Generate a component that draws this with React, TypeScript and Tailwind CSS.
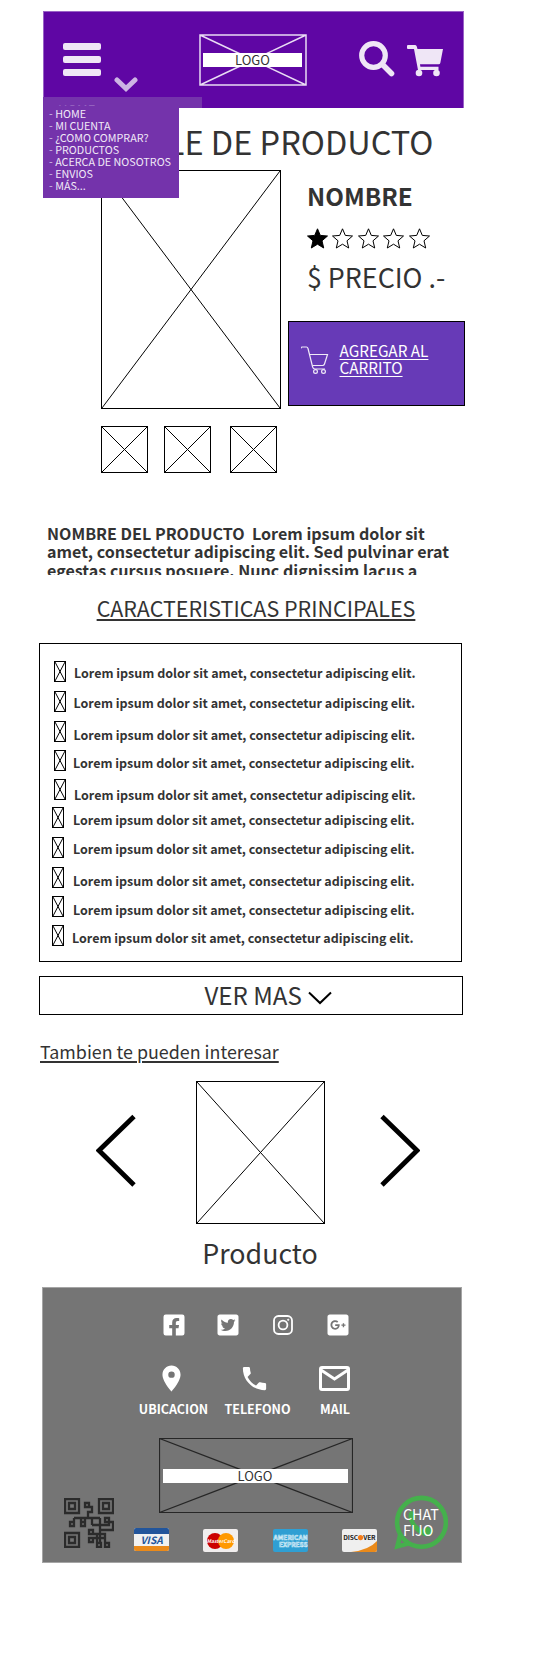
import { FaFacebookSquare, FaTwitterSquare, FaGooglePlusSquare } from "react-icons/fa";
import { MdLocationOn, MdPhone } from "react-icons/md";

const menuItems = ["HOME", "MI CUENTA", "¿COMO COMPRAR?", "PRODUCTOS", "ACERCA DE NOSOTROS", "ENVIOS", "MÁS..."];

const features = [
  { row: "mt-[17px] pl-[14px]", text: "ml-[8px] mt-[1px]" },
  { row: "mt-[9px] pl-[14px]", text: "ml-[7.5px] mt-[1px]" },
  { row: "mt-[9px] pl-[14px]", text: "ml-[7.5px] mt-[3px]" },
  { row: "mt-[8px] pl-[14px]", text: "ml-[7px] mt-[2px]" },
  { row: "mt-[8px] pl-[14px]", text: "ml-[8px] mt-[5px]" },
  { row: "mt-[7px] pl-[12px]", text: "ml-[9px] mt-[2px]" },
  { row: "mt-[9px] pl-[12px]", text: "ml-[9px] mt-[1px]" },
  { row: "mt-[9px] pl-[12px]", text: "ml-[9px] mt-[3px]" },
  { row: "mt-[8px] pl-[12px]", text: "ml-[9px] mt-[3px]" },
  { row: "mt-[8px] pl-[12px]", text: "ml-[8px] mt-[2px]" },
];

function Placeholder({ className }: { className: string }) {
  return (
    <div className={`shrink-0 border border-black ${className}`}>
      <svg className="block h-full w-full" viewBox="0 0 100 100" preserveAspectRatio="none">
        <path d="M0 0L100 100M100 0L0 100" stroke="#000" strokeWidth="1" vectorEffect="non-scaling-stroke" />
      </svg>
    </div>
  );
}

function Star({ filled }: { filled?: boolean }) {
  return (
    <svg className="h-[21px] w-[21px] overflow-visible" viewBox="0 0 21 21">
      <path
        d="M10.5 .8L13.3 7.4L20.5 8L15 12.8L16.7 20L10.5 16.2L4.3 20L6 12.8L.5 8L7.7 7.4Z"
        fill={filled ? "#000" : "none"}
        stroke="#000"
        strokeWidth="1"
      />
    </svg>
  );
}

function Header() {
  return (
    <header className="relative z-10 ml-[43px] mt-[11px] flex h-[97px] w-[421px] items-start border-x border-t border-[#9a63c6] bg-[#5f06a4]">
      <div className="ml-[19px] mt-[31px] flex w-[38px] flex-col gap-[6px]">
        <span className="h-[7px] rounded-[2px] bg-[#efe6f6]" />
        <span className="h-[7px] rounded-[2px] bg-[#efe6f6]" />
        <span className="h-[7px] rounded-[2px] bg-[#efe6f6]" />
      </div>
      <svg className="ml-[13px] mt-[65px] h-[15px] w-[24px]" viewBox="0 0 24 15">
        <path d="M3 3L12 11.5L21 3" fill="none" stroke="#cdb4e4" strokeWidth="5" strokeLinecap="round" />
      </svg>
      <div className="relative ml-[61px] mt-[22px] flex h-[52px] w-[108px] items-center">
        <svg className="absolute inset-0 h-full w-full" viewBox="0 0 108 52">
          <path d="M1 1H107V51H1ZL107 51M107 1L1 51" fill="none" stroke="#e9dcf4" strokeWidth="1.5" />
        </svg>
        <div className="relative ml-[4px] h-[14px] w-[99px] bg-white text-center text-[13px] leading-[13px] text-[#333]">LOGO</div>
      </div>
      <svg className="ml-[52px] mt-[29px] h-[37px] w-[36px]" viewBox="0 0 36 37">
        <circle cx="14.5" cy="14.5" r="11.8" fill="none" stroke="#efe6f6" strokeWidth="5.2" />
        <path d="M24 24L32.5 32.5" stroke="#efe6f6" strokeWidth="5.6" strokeLinecap="round" />
      </svg>
      <svg className="ml-[12px] mt-[33px] h-[32px] w-[36px]" viewBox="0 0 36 32">
        <path
          d="M1 0H8.3Q9.3 0 9.8 1.5L10.5 4H36L33.3 18Q33 19.3 31.6 19.3H13L13.4 21.8H31.5V25H11L7 4H1Q0 4 0 3V1Q0 0 1 0Z"
          fill="#efe6f6"
        />
        <circle cx="12" cy="28" r="3.3" fill="#efe6f6" />
        <circle cx="29.5" cy="28" r="3.3" fill="#efe6f6" />
      </svg>

      <div className="absolute -left-px top-[85px] h-[11px] w-[159px] overflow-hidden bg-[#7433ab] pl-[15px] text-[13px] leading-[25px] text-[#9361bf]">
        HOME
      </div>
      <nav className="absolute -left-px top-[94px] h-[92px] w-[136px] bg-[#7433ab] pl-[6px] pt-[2px]">
        <ul>
          {menuItems.map((item) => (
            <li key={item} className="h-[12px] whitespace-nowrap text-[10.75px] leading-[12px] text-[#f1e9f7]">
              <span className="text-[#d6c2e6]">-</span> {item}
            </li>
          ))}
        </ul>
      </nav>
    </header>
  );
}

function Product() {
  return (
    <section className="flex pl-[101px]">
      <div className="w-[180px]">
        <Placeholder className="h-[239px] w-[180px]" />
        <div className="mt-[17px] flex">
          <Placeholder className="h-[47px] w-[47px]" />
          <Placeholder className="ml-[16px] h-[47px] w-[47px]" />
          <Placeholder className="ml-[19px] h-[47px] w-[47px]" />
        </div>
      </div>
      <div className="ml-[7px] w-[177px]">
        <h2 className="pl-[19px] pt-px text-[24.3px] font-bold leading-[50px]">NOMBRE</h2>
        <div className="mt-[7px] flex gap-[4.6px] pl-[18.5px]">
          <Star filled />
          <Star />
          <Star />
          <Star />
          <Star />
        </div>
        <p className="whitespace-nowrap pl-[19px] pt-px text-[26.8px] leading-[54px]">$ PRECIO .-</p>
        <button className="mt-[17px] flex h-[85px] w-[177px] border border-black bg-[#673ab7] text-left text-white">
          <svg className="ml-[12px] mt-[24px] h-[28px] w-[28px] shrink-0" viewBox="0 0 28 28" fill="none" stroke="#f0eaf8" strokeWidth="1.2">
            <path d="M0 2.5Q0 1 1.5 1H5.5Q6.5 1 7 2.5L11.5 20.5Q12 23 14 23H24" />
            <path d="M9 8.5H26.5L23.5 18Q23 19.5 21.5 19.5H11.5" />
            <circle cx="14.5" cy="25.5" r="1.9" />
            <circle cx="22.5" cy="25.5" r="1.9" />
          </svg>
          <span className="ml-[10.5px] mt-[20px] w-[110px] text-[15.3px] leading-[17px] underline decoration-1 underline-offset-[2px]">
            AGREGAR AL
            <br />
            CARRITO
          </span>
        </button>
      </div>
    </section>
  );
}

function Features() {
  return (
    <ul className="ml-[39px] h-[319px] w-[423px] border border-black">
      {features.map((f, i) => (
        <li key={i} className={`flex h-[21px] ${f.row}`}>
          <Placeholder className="h-[21px] w-[12px]" />
          <span className={`whitespace-nowrap text-[12.5px] font-bold leading-[21px] ${f.text}`}>
            Lorem ipsum dolor sit amet, consectetur adipiscing elit.
          </span>
        </li>
      ))}
    </ul>
  );
}

function QrCode() {
  return (
    <svg className="ml-[21px] mt-[60px] h-[50px] w-[50px] shrink-0" viewBox="0 0 50 50" fill="none" stroke="#2b2b2b" strokeWidth="2.3">
      <path d="M1 1H15V15H1ZM5 5H11V11H5ZM35 1H49V15H35ZM39 5H45V11H39ZM1 35H15V49H1ZM5 39H11V45H5Z" />
      <path d="M21 5H25V9H21ZM25 9H28V14H24V20M10 20H36M10 20V24M6 24H10V28H6ZM17 20V24M17 24H21V28H17ZM21 24V20M28 20V27M28 27H45V24M41 20H45V24H41ZM45 24H49V32H36M36 20V45M25 32H29V36H25ZM25 40H29V44H25ZM29 36H33V40H29M33 36H41V40H33V45M33 45H37V49H33ZM41 45H45V49H41ZM41 45V40" />
    </svg>
  );
}

function Cards() {
  return (
    <div className="mt-[15px] flex h-[24px] w-[243px] justify-between">
      <div className="flex h-[23px] w-[35px] flex-col overflow-hidden rounded-[2px] bg-[#f1f1f1]">
        <span className="h-[5.5px] bg-[#22559b]" />
        <span className="grow text-center text-[10px] font-bold italic leading-[12px] text-[#22559b]">VISA</span>
        <span className="h-[5.5px] bg-[#ea8a1a]" />
      </div>
      <div className="relative mt-px flex h-[23px] w-[35px] items-center justify-center rounded-[2px] bg-[#f1eeee]">
        <span className="h-[16px] w-[16px] rounded-full bg-[#cc0000]" />
        <span className="-ml-[5px] h-[16px] w-[16px] rounded-full bg-[#ff9900]" />
        <span className="absolute inset-x-0 text-center text-[5px] font-bold italic text-white">MasterCard</span>
      </div>
      <div className="mt-px h-[23px] w-[35px] overflow-hidden rounded-[2px] bg-[#2f9fd3] pt-[5px] font-bold">
        <svg className="h-[14px] w-[35px]" viewBox="0 0 35 14" fill="#2f9fd3" stroke="#d8eef8" strokeWidth=".6" fontSize="6.5">
          <text x="0.5" y="6" textLength="34">AMERICAN</text>
          <text x="6" y="12.5" textLength="28.5">EXPRESS</text>
        </svg>
      </div>
      <div className="mt-px h-[23px] w-[35px] overflow-hidden rounded-[2px] bg-[#efefef]">
        <svg className="h-[23px] w-[35px]" viewBox="0 0 35 23">
          <path d="M35 12Q27 21 9 23H35Z" fill="#ea8a1a" />
          <text x="1.3" y="10.9" fontSize="6.6" fontWeight="700" textLength="14.8" fill="#222">DISC</text>
          <circle cx="18.5" cy="8.6" r="2.6" fill="#f47a16" />
          <text x="21.2" y="10.9" fontSize="6.6" fontWeight="700" textLength="12.4" fill="#222">VER</text>
        </svg>
      </div>
    </div>
  );
}

function Footer() {
  return (
    <footer className="ml-[42px] h-[276px] w-[420px] border border-[#a5a5a5] bg-[#757575] text-white">
      <div className="ml-[118.5px] mt-[25px] flex h-[24px] gap-[30.7px]">
        <FaFacebookSquare className="h-[24px] w-[24px]" />
        <FaTwitterSquare className="h-[24px] w-[24px]" />
        <svg className="mx-[2px] mt-[2px] h-[20px] w-[20px]" viewBox="0 0 20 20" fill="none" stroke="#fff" strokeWidth="1.8">
          <rect x="1" y="1" width="18" height="18" rx="4.5" />
          <circle cx="10" cy="10" r="4.4" />
          <circle cx="15.2" cy="4.8" r=".7" fill="#fff" strokeWidth=".8" />
        </svg>
        <FaGooglePlusSquare className="h-[24px] w-[24px]" />
      </div>
      <div className="ml-[88.5px] mt-[28px] flex text-center text-[12.5px] font-bold">
        <div className="w-[84px]">
          <MdLocationOn className="ml-[24px] h-[31px] w-[31px] -translate-y-[2px]" />
          <p className="mt-[4px] leading-[18px]">UBICACION</p>
        </div>
        <div className="w-[84px]">
          <MdPhone className="ml-[23px] h-[31px] w-[31px] -translate-y-[2px]" />
          <p className="mt-[4px] leading-[18px]">TELEFONO</p>
        </div>
        <div className="w-[71px]">
          <svg className="ml-[19px] h-[31px] w-[32px]" viewBox="0 0 32 31" fill="none" stroke="#fff" strokeWidth="3">
            <rect x="1.5" y="2.5" width="28" height="22" rx="1.5" />
            <path d="M2 5L15.5 14L29 5" />
          </svg>
          <p className="mt-[4px] leading-[18px]">MAIL</p>
        </div>
      </div>
      <div className="mt-[20px] flex">
        <QrCode />
        <div className="ml-[20px] w-[243px] shrink-0">
          <div className="relative ml-[24.5px] flex h-[75px] w-[194px] items-center">
            <svg className="absolute inset-0 h-full w-full" viewBox="0 0 194 75">
              <path d="M.5 .5H193.5V74.5H.5ZL193.5 74.5M193.5 .5L.5 74.5" fill="none" stroke="#262626" strokeWidth="1.2" />
            </svg>
            <div className="relative ml-[4px] h-[14px] w-[185px] bg-white text-center text-[13px] leading-[13px] text-[#333]">LOGO</div>
          </div>
          <Cards />
        </div>
        <div className="relative ml-[17px] mt-[57px] h-[55px] w-[54px] shrink-0">
          <svg className="absolute inset-0 h-full w-full" viewBox="0 0 54 55">
            <circle cx="27.5" cy="27.3" r="24.4" fill="none" stroke="#45b04c" strokeWidth="4.6" />
            <path d="M.3 54.5L4.5 37L8 41L6.5 48.5L14 46.5L18.5 49.8Z" fill="#45b04c" />
            <path d="M15 18Q18 14 20.5 18L22 22L20 26Q24 33 30 35L33 31.5L38.5 34.5Q39.5 39 35.5 41Q28 43 19 33Q13 25 15 18Z" fill="#45b04c" />
          </svg>
          <p className="relative pl-[9px] pt-[11px] text-[14.3px] leading-[16px]">
            CHAT
            <br />
            FIJO
          </p>
        </div>
      </div>
    </footer>
  );
}

export default function App() {
  return (
    <main className="flex h-[1675px] w-[542px] flex-col overflow-hidden bg-white font-['Noto_Sans_CJK_SC','Noto_Sans',sans-serif] text-[#333]">
      <Header />
      <h1 className="h-[62px] whitespace-nowrap pr-[108.5px] text-right text-[32.5px] leading-[66px]">DETALLE DE PRODUCTO</h1>
      <Product />
      <p className="ml-[47px] mt-[51px] h-[51px] w-[430px] shrink-0 overflow-hidden whitespace-pre text-[16.08px] font-bold leading-[18.3px]">
        {"NOMBRE DEL PRODUCTO  Lorem ipsum dolor sit\namet, consectetur adipiscing elit. Sed pulvinar erat\negestas cursus posuere. Nunc dignissim lacus a"}
      </p>
      <h3 className="h-[68px] w-[512px] text-center text-[21.45px] leading-[66px] underline decoration-2 underline-offset-[2px]">
        CARACTERISTICAS PRINCIPALES
      </h3>
      <Features />
      <button className="ml-[39px] mt-[14px] flex h-[39px] w-[424px] border border-black pl-[164.5px] text-[24.1px] leading-[36px]">
        VER MAS
        <svg className="ml-[6px] mt-[14px] h-[14px] w-[24px]" viewBox="0 0 24 14">
          <path d="M1 1.5L12 12L23 1.5" fill="none" stroke="#000" strokeWidth="2" />
        </svg>
      </button>
      <p className="ml-[40px] mt-[22px] text-[17.87px] leading-[29px] underline decoration-[1.5px] underline-offset-[2px]">Tambien te pueden interesar</p>
      <div className="mt-[15px] flex h-[143px] pl-[96px]">
        <svg className="mt-[33px] h-[74px] w-[40px]" viewBox="0 0 40 74">
          <path d="M38 2.5L3 36.5L38 71" fill="none" stroke="#000" strokeWidth="4.8" />
        </svg>
        <Placeholder className="ml-[60px] h-[143px] w-[129px]" />
        <svg className="ml-[55px] mt-[33px] h-[74px] w-[40px]" viewBox="0 0 40 74">
          <path d="M2 2.5L37 36.5L2 71" fill="none" stroke="#000" strokeWidth="4.8" />
        </svg>
      </div>
      <p className="h-[63px] w-[520px] text-center text-[26.8px] leading-[58px]">Producto</p>
      <Footer />
    </main>
  );
}
